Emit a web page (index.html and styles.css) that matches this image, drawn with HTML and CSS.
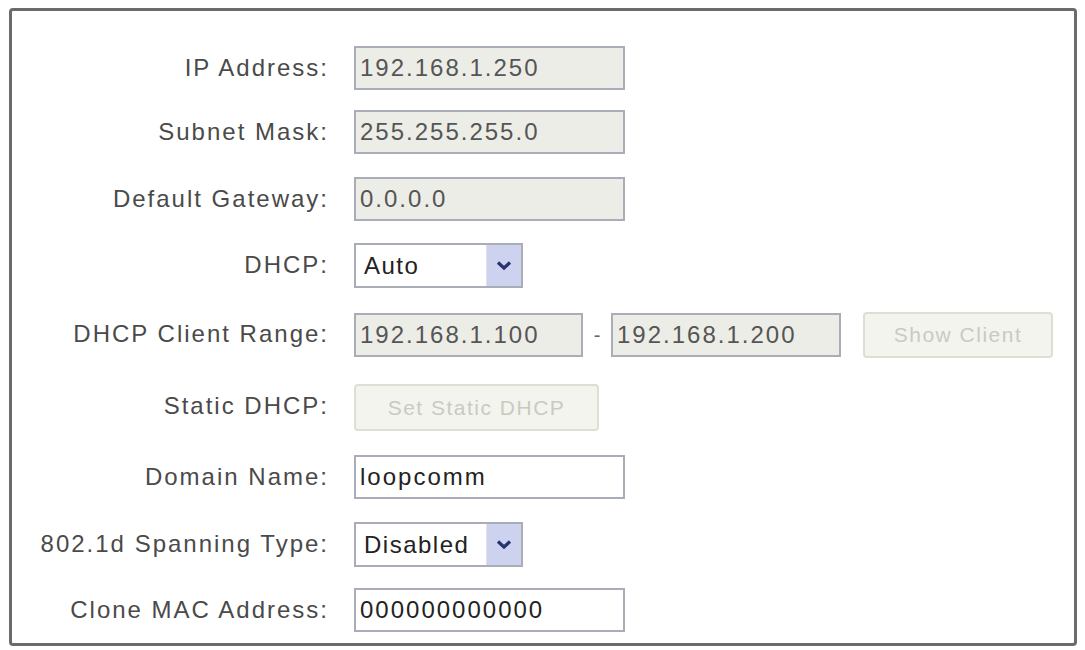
FILE: index.html
```html
<!DOCTYPE html>
<html lang="en">
<head>
  <meta charset="UTF-8" />
  <title>LAN Setup</title>
  <link rel="stylesheet" href="styles.css">
</head>
<body>
  <div class="panel">
    <form class="lan-form">
      <label>IP Address:</label>
      <div><input class="field ro" type="text" value="192.168.1.250" readonly></div>

      <label>Subnet Mask:</label>
      <div><input class="field ro" type="text" value="255.255.255.0" readonly></div>

      <label>Default Gateway:</label>
      <div><input class="field ro" type="text" value="0.0.0.0" readonly></div>

      <label>DHCP:</label>
      <div class="dropdown">
        <span class="dropdown-text">Auto</span>
        <span class="dropdown-btn">
          <svg width="16" height="11" viewBox="0 0 16 11"><path d="M2 2.5 L8 8 L14 2.5" fill="none" stroke="#26336e" stroke-width="3.2"/></svg>
        </span>
      </div>

      <label>DHCP Client Range:</label>
      <div class="range">
        <input class="field ro short" type="text" value="192.168.1.100" readonly>
        <span class="dash">-</span>
        <input class="field ro short" type="text" value="192.168.1.200" readonly>
        <button type="button" class="btn btn-client" disabled>Show Client</button>
      </div>

      <label>Static DHCP:</label>
      <div><button type="button" class="btn btn-static" disabled>Set Static DHCP</button></div>

      <label>Domain Name:</label>
      <div><input class="field" type="text" value="loopcomm"></div>

      <label>802.1d Spanning Type:</label>
      <div class="dropdown">
        <span class="dropdown-text">Disabled</span>
        <span class="dropdown-btn">
          <svg width="16" height="11" viewBox="0 0 16 11"><path d="M2 2.5 L8 8 L14 2.5" fill="none" stroke="#26336e" stroke-width="3.2"/></svg>
        </span>
      </div>

      <label>Clone MAC Address:</label>
      <div><input class="field" type="text" value="000000000000"></div>
    </form>
  </div>
</body>
</html>
```

FILE: styles.css
```css
body {
  margin: 0;
  background: #fff;
  font-family: "Liberation Sans", Arial, sans-serif;
  color: #333;
}
.panel {
  margin: 8px 0 0 9px;
  width: 1062px;
  height: 597px;
  border: 3px solid #6b6b6b;
  border-radius: 4px;
  padding-top: 35px;
}
.lan-form {
  display: grid;
  grid-template-columns: 317px 1fr;
  grid-template-rows: 64px 67px 66px 69px 72px 71px 67px 66px 46px;
  column-gap: 25px;
  align-items: start;
}
.lan-form label {
  text-align: right;
  line-height: 44px;
  font-size: 24px;
  letter-spacing: 2px;
  color: #4a4a4a;
}
.field {
  width: 271px;
  height: 44px;
  box-sizing: border-box;
  border: 2px solid #a9adb8;
  background: #fff;
  padding: 0 4px;
  font-family: inherit;
  font-size: 24px;
  letter-spacing: 2px;
  color: #222;
  outline: none;
}
.field.ro {
  background: #ecede6;
  color: #555;
}
.field.short { width: 229px; }
.range {
  display: flex;
  align-items: center;
}
.range .field + .dash + .field { width: 230px; }
.dash {
  width: 28px;
  text-align: center;
  font-size: 20px;
  color: #666;
}
.btn {
  height: 46px;
  box-sizing: border-box;
  border: 2px solid #dedfd3;
  border-radius: 4px;
  background: #f4f4ee;
  color: #c9cac2;
  font-family: inherit;
  font-size: 21px;
  letter-spacing: 1.5px;
  padding: 0;
}
.btn-client {
  width: 190px;
  margin-left: 22px;
}
.btn-static {
  width: 245px;
  height: 47px;
}
.dropdown {
  display: flex;
  width: 169px;
  height: 45px;
  box-sizing: border-box;
  border: 2px solid #a9adb8;
  background: #fff;
}
.dropdown-text {
  flex: 1;
  padding-left: 8px;
  line-height: 41px;
  font-size: 24px;
  letter-spacing: 1.5px;
  color: #222;
}
.dropdown-btn {
  width: 34px;
  display: flex;
  align-items: center;
  justify-content: center;
  background: #cdd3ee;
  border-left: 1px solid #dde1f2;
}
```
